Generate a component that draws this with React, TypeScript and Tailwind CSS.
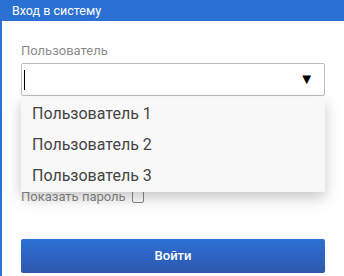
export default function App() {
  const users = ["Пользователь 1", "Пользователь 2", "Пользователь 3"];

  return (
    <div className="w-[344px] h-[276px] bg-white overflow-hidden font-['Roboto',sans-serif]">
      {/* Title bar */}
      <div className="h-[21px] bg-[#2b70d3] pl-3 text-[12.5px] leading-[21px] text-white">
        Вход в систему
      </div>

      <div className="h-[255px] border-l-2 border-[#2b70d3] pl-[19px] pr-[19px] pt-[22px]">
        <div className="relative">
          <label className="block text-[13px] leading-[15px] text-[#8a8a8a]">
            Пользователь
          </label>
          <div className="mt-[5px] flex h-[33px] items-center justify-between rounded-[2px] border border-[#bdbdbd] pl-[2px] pr-[10px]">
            <span className="h-[20px] w-px bg-black" />
            <span className="text-[15px] leading-none text-black">▼</span>
          </div>

          <div className="mt-[93px] flex items-center gap-[6px] text-[13px] leading-[15px] text-[#8a8a8a]">
            Показать пароль
            <span className="h-[12px] w-[12px] rounded-[2px] border border-[#8a8a8a]" />
          </div>

          {/* Dropdown list */}
          <ul className="absolute left-0 top-[54px] w-[304px] bg-[#f8f8f8] py-[1px] shadow-[0_6px_14px_rgba(0,0,0,0.22)]">
            {users.map((u) => (
              <li
                key={u}
                className="h-[31px] pl-[11px] text-[16px] leading-[31px] text-[#444]"
              >
                {u}
              </li>
            ))}
          </ul>
        </div>

        <button className="mt-[35px] h-[34px] w-[304px] rounded-[2px] bg-gradient-to-b from-[#2d6fd6] to-[#2d58ad] text-[13px] font-medium text-white">
          Войти
        </button>
      </div>
    </div>
  );
}
